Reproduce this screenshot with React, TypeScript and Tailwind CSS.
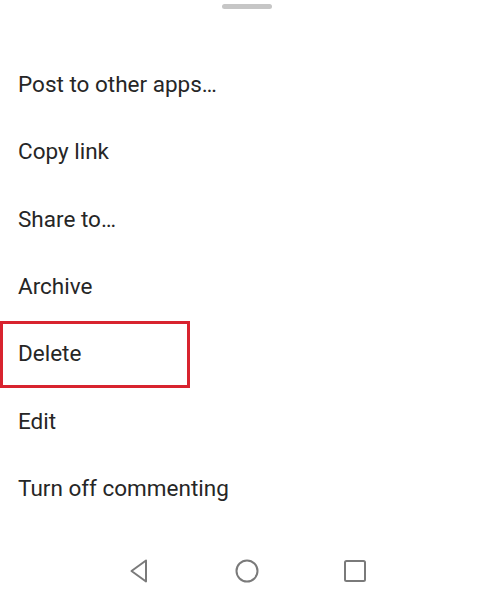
import { FC } from "react";

const items = [
  "Post to other apps…",
  "Copy link",
  "Share to…",
  "Archive",
  "Delete",
  "Edit",
  "Turn off commenting",
];

const NavBar: FC = () => (
  <div className="mt-[24px] flex h-[48px] items-center justify-center gap-[84px]">
    <svg width="24" height="26" viewBox="0 0 24 26" className="text-[#7a7a7a]">
      <path
        d="M19 2.5 L4.5 13 L19 23.5 Z"
        fill="none"
        stroke="currentColor"
        strokeWidth="2"
        strokeLinejoin="round"
      />
    </svg>
    <svg width="24" height="24" viewBox="0 0 24 24" className="text-[#7a7a7a]">
      <circle cx="12" cy="12" r="10.5" fill="none" stroke="currentColor" strokeWidth="2" />
    </svg>
    <svg width="24" height="24" viewBox="0 0 24 24" className="text-[#7a7a7a]">
      <rect x="2" y="2" width="20" height="20" rx="1.5" fill="none" stroke="currentColor" strokeWidth="2" />
    </svg>
  </div>
);

const App: FC = () => {
  return (
    <div
      className="flex h-[600px] w-full flex-col bg-white"
      style={{ fontFamily: "Roboto, 'Liberation Sans', sans-serif" }}
    >
      <div className="flex justify-center pt-[4px]">
        <div className="h-[5px] w-[50px] rounded-full bg-[#c6c6c6]" />
      </div>
      <div className="mt-[42px] flex flex-col">
        {items.map((label) => (
          <div
            key={label}
            className="relative flex h-[67.4px] items-center pl-[18px] text-[22.5px] text-[#262626]"
          >
            {label === "Delete" && (
              <span className="absolute left-0 top-0 h-full w-[190px] border-[3px] border-[#d8232f]" />
            )}
            <span className="relative">{label}</span>
          </div>
        ))}
      </div>
      <NavBar />
    </div>
  );
};

export default App;
